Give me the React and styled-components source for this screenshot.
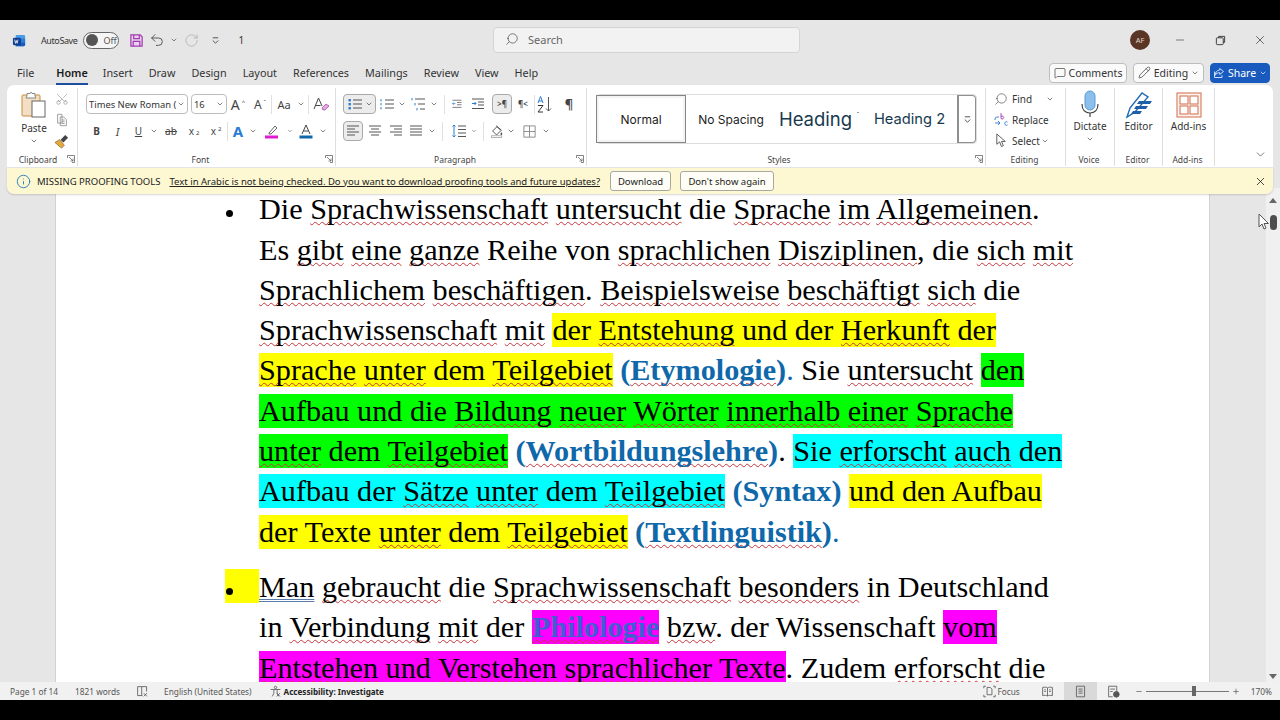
import React from 'react';
import styled, { createGlobalStyle } from 'styled-components';
import {
  Search, Scissors, Pencil, MessageSquare, X, Minus, Undo2, RotateCw, ChevronDown, Info, Plus,
} from 'lucide-react';

const ui = '"Noto Sans", "Open Sans", sans-serif';

const GlobalStyle = createGlobalStyle`
  html, body { margin: 0; padding: 0; background: #000; }
  * { box-sizing: border-box; }
`;

const Screen = styled.div`
  position: relative;
  width: 1280px;
  height: 720px;
  padding: 20px 0;
  background: #000;
  overflow: hidden;
  font-family: ${ui};
`;

const Window = styled.div`
  height: 680px;
  display: flex;
  flex-direction: column;
  background: #e6e6e6;
  color: #2b2b2b;
`;

/* title bar */
const TitleBar = styled.div`
  height: 40px;
  flex: none;
  display: flex;
  align-items: center;
`;

const QuickAccess = styled.div`
  width: 493px;
  padding-left: 12px;
  display: flex;
  align-items: center;
`;

const AutoSave = styled.span`
  margin: 0 6px 0 14px;
  font-size: 9px;
  letter-spacing: -.4px;
  color: #333;
`;

const Toggle = styled.div`
  width: 36px;
  height: 17px;
  border: 1px solid #666;
  border-radius: 9px;
  background: #f5f5f5;
  display: flex;
  align-items: center;
  gap: 5px;
  padding-left: 2px;
  font-size: 9px;
  color: #555;
  margin-right: 9px;
`;

const Knob = styled.span`
  width: 12px;
  height: 12px;
  border-radius: 50%;
  background: #555;
`;

const Slot = styled.div`
  width: ${p => p.$w}px;
  height: 20px;
  flex: none;
  margin-left: ${p => p.$ml || 0}px;
  display: flex;
  align-items: center;
  justify-content: center;
  font-size: ${p => p.$fs || 11}px;
  color: ${p => p.$c || '#333'};
`;

const SearchBox = styled.div`
  width: 307px;
  height: 26px;
  border: 1px solid #d4d4d4;
  border-radius: 4px;
  background: #f2f2f2;
  display: flex;
  align-items: center;
  gap: 9px;
  padding: 0 0 2px 11px;
  font-size: 11px;
  color: #666;
`;

const FlippedSearch = styled(Search)`
  transform: scaleX(-1);
`;

const TitleRight = styled.div`
  flex: 1;
  display: flex;
  align-items: center;
  justify-content: flex-end;
`;

const Avatar = styled.div`
  width: 20px;
  height: 20px;
  border-radius: 50%;
  background: #5a3526;
  color: #e6d5cc;
  font-size: 7.5px;
  display: flex;
  align-items: center;
  justify-content: center;
  margin-right: 10px;
`;

const WinBtn = styled.div`
  width: 40px;
  display: flex;
  justify-content: center;
  color: #333;
`;

/* tab row */
const TabRow = styled.div`
  height: 25px;
  flex: none;
  display: flex;
  align-items: center;
  padding: 0 10px 0 17px;
`;

const Tab = styled.div`
  margin-right: ${p => p.$mr}px;
  height: 25px;
  line-height: 26px;
  font-size: 10.8px;
  color: ${p => (p.$active ? '#1a1a1a' : '#333')};
  font-weight: ${p => (p.$active ? 600 : 400)};
  border-bottom: ${p => (p.$active ? '2px solid #1f4f9c' : '2px solid transparent')};
`;

const TabActions = styled.div`
  margin-left: auto;
  display: flex;
  gap: 6px;
`;

const ActionBtn = styled.div`
  height: 20px;
  width: ${p => p.$w}px;
  border: 1px solid ${p => (p.$primary ? '#185abd' : '#bdbdbd')};
  border-radius: 4px;
  background: ${p => (p.$primary ? '#185abd' : '#fafafa')};
  color: ${p => (p.$primary ? '#fff' : '#333')};
  display: flex;
  align-items: center;
  justify-content: center;
  gap: 3px;
  font-size: 10.5px;
`;

/* ribbon */
const Ribbon = styled.div`
  height: 82px;
  flex: none;
  margin: 0 7px;
  background: #fff;
  border-radius: 7px 7px 0 0;
  display: flex;
`;

const Group = styled.div`
  width: ${p => p.$w}px;
  flex: none;
  display: flex;
  flex-direction: column;
  margin: 3px 0 1px;
  border-right: 1px solid #dedede;
`;

const GroupBody = styled.div`
  flex: 1;
  display: flex;
  flex-direction: column;
  padding-left: ${p => p.$pl || 0}px;
  padding-top: ${p => p.$pt ?? 6}px;
  gap: ${p => p.$gap ?? 7}px;
  align-items: ${p => (p.$center ? 'center' : 'stretch')};
`;

const GroupLabel = styled.div`
  height: 14px;
  flex: none;
  display: grid;
  grid-template-columns: 1fr auto 1fr;
  align-items: center;
  font-size: 8.5px;
  color: #444;
  padding-right: 2px;
`;

const LabelText = styled.span`
  margin-right: ${p => p.$shift * 2}px;
`;

const Launcher = styled.span`
  justify-self: end;
  display: flex;
  color: #666;
`;

const ToolRow = styled.div`
  display: flex;
  align-items: center;
  height: 20px;
`;

const Tool = styled.div`
  width: ${p => p.$w}px;
  height: 20px;
  flex: none;
  display: flex;
  align-items: center;
  justify-content: center;
  gap: 2px;
  color: #444;
  font-size: ${p => p.$fs || 11}px;
  border-radius: 4px;
  border: 1px solid ${p => (p.$active ? '#a9a9a9' : 'transparent')};
  background: ${p => (p.$active ? '#ececec' : 'transparent')};
`;

const Glyph = styled.span`
  font-size: ${p => p.$fs || 10}px;
  font-weight: ${p => p.$fw || 400};
  color: ${p => p.$c || '#444'};
  line-height: 1;
`;

const Tiny = styled.span`
  font-size: 6px;
  line-height: 1;
  align-self: ${p => (p.$low ? 'flex-end' : 'flex-start')};
  margin-top: ${p => (p.$low ? 0 : 4)}px;
  margin-bottom: ${p => (p.$low ? 4 : 0)}px;
`;

const Sep = styled.div`
  width: 1px;
  height: 19px;
  flex: none;
  margin: 0 ${p => p.$m || 0}px;
  background: #e0e0e0;
`;

const Select = styled.div`
  width: ${p => p.$w}px;
  height: 20px;
  flex: none;
  margin-right: ${p => p.$mr || 0}px;
  border: 1px solid #bdbdbd;
  border-radius: 4px;
  display: flex;
  align-items: center;
  justify-content: space-between;
  padding: 0 2px;
  font-size: 9.4px;
  color: #333;
  white-space: nowrap;
`;

const ClipRow = styled.div`
  display: flex;
  padding-left: 7px;
`;

const PasteCol = styled.div`
  width: 40px;
  display: flex;
  flex-direction: column;
  align-items: center;
  font-size: 10px;
  color: #333;
`;

const ClipSmall = styled.div`
  display: flex;
  flex-direction: column;
  align-items: center;
  gap: 7px;
  padding-top: 1px;
  color: #888;
`;

const UprightScissors = styled(Scissors)`
  transform: rotate(-90deg);
`;

const BigLabel = styled.div`
  font-size: 10px;
  color: #333;
  margin-top: ${p => p.$mt ?? 3}px;
  margin-bottom: ${p => p.$mb || 0}px;
  line-height: 14px;
`;

const Gallery = styled.div`
  width: 381px;
  height: 50px;
  border: 1px solid #dcdcdc;
  border-radius: 4px;
  display: flex;
  align-items: center;
`;

const StyleItem = styled.div`
  width: ${p => p.$w || 90}px;
  height: ${p => (p.$selected ? 48 : 44)}px;
  margin-left: ${p => (p.$selected ? -1 : 0)}px;
  flex: none;
  display: flex;
  align-items: center;
  justify-content: center;
  border: ${p => (p.$selected ? '1px solid #858585' : 'none')};
  box-shadow: ${p => (p.$selected ? 'inset 0 0 0 2px #f3f3f3' : 'none')};
  font-family: Inter, "Noto Sans", sans-serif;
  font-size: ${p => p.$fs || 12}px;
  color: ${p => p.$c || '#1c1c1c'};
  white-space: nowrap;
`;

const Speck = styled.span`
  width: 2px;
  height: 1px;
  flex: none;
  align-self: flex-start;
  margin: 15px 0 0 5px;
  background: #8aa0ae;
`;

const MoreBtn = styled.div`
  flex: 1;
  height: 48px;
  border: 1px solid #8f8f8f;
  border-left-width: 2px;
  border-radius: 0 4px 4px 0;
  display: flex;
  align-items: center;
  justify-content: center;
  color: #444;
`;

const EditRow = styled.div`
  height: 21px;
  display: flex;
  align-items: center;
  font-size: 10px;
  color: #333;
`;

const EditIcon = styled.span`
  width: 26px;
  padding-left: 8px;
  display: flex;
  flex: none;
`;

const RibbonEnd = styled.div`
  flex: 1;
  display: flex;
  align-items: flex-end;
  justify-content: flex-end;
  padding: 0 6px 6px 0;
  color: #444;
`;

/* message bar */
const MessageBar = styled.div`
  height: 26px;
  flex: none;
  margin: 1px 7px 0;
  padding: 0 6px 0 9px;
  background: #fdf8d2;
  border-radius: 0 0 7px 7px;
  box-shadow: 0 1px 2px rgba(0, 0, 0, .16);
  display: flex;
  align-items: center;
  font-size: 9.5px;
  color: #222;
  position: relative;
  z-index: 1;
`;

const MsgTitle = styled.span`
  margin: 0 9px 0 6px;
  white-space: nowrap;
`;

const MsgLink = styled.span`
  text-decoration: underline;
  white-space: nowrap;
  margin-right: 10px;
`;

const MsgBtn = styled.div`
  height: 20px;
  width: ${p => p.$w}px;
  margin-right: 9px;
  border: 1px solid #a8a8a0;
  border-radius: 3px;
  background: #fffef6;
  display: flex;
  align-items: center;
  justify-content: center;
  white-space: nowrap;
`;

const MsgClose = styled.div`
  margin-left: auto;
  display: flex;
`;

/* document: runs a few px under the message bar and the status bar, like a scrolled page */
const DocArea = styled.div`
  flex: 1;
  min-height: 0;
  margin: -6px 0 -5px;
  display: flex;
`;

const Page = styled.div`
  width: 1155px;
  margin-left: 55px;
  flex: none;
  background: #fff;
  border-left: 1px solid #d2d2d2;
  border-right: 1px solid #d2d2d2;
  padding-left: 169px;
`;

const Paragraph = styled.div`
  display: grid;
  grid-template-columns: 34px 1fr;
  margin-top: ${p => p.$mt}px;
`;

const BulletCell = styled.div`
  height: 34px;
  margin-top: 2px;
  background: ${p => p.$hl || 'transparent'};
  display: flex;
  align-items: center;
  padding: 11px 0 0 1px;
`;

const Dot = styled.span`
  width: 7px;
  height: 7px;
  border-radius: 50%;
  background: #000;
`;

const Line = styled.div`
  height: 40.3px;
  line-height: 40.3px;
  font-family: "Liberation Serif", "Times New Roman", serif;
  font-size: 30.2px;
  color: #000;
  white-space: nowrap;
`;

const Mark = styled.span`
  background: ${p => p.$bg};
`;

const Term = styled.span`
  font-weight: ${p => (p.$plain ? 400 : 700)};
  color: ${p => p.$c || '#0f68a9'};
`;

const W = styled.span`
  text-decoration: underline wavy #c8353a 1px;
  text-underline-offset: 2px;
  text-decoration-skip-ink: none;
`;

const Grammar = styled.span`
  text-decoration: underline double #5a7ca8 1px;
  text-underline-offset: 2px;
  text-decoration-skip-ink: none;
`;

const Scrollbar = styled.div`
  margin-left: 56px;
  flex: 1;
  background: #f0f0f0;
  display: flex;
  flex-direction: column;
  align-items: center;
  padding: 10px 0 8px;
`;

const Arrow = styled.span`
  width: 0;
  height: 0;
  border-left: 4px solid transparent;
  border-right: 4px solid transparent;
  border-${p => (p.$down ? 'top' : 'bottom')}: 5px solid #666;
`;

const Thumb = styled.div`
  width: 7px;
  height: 15px;
  margin-top: 12px;
  border-radius: 4px;
  background: #4d4d4d;
`;

const Spacer = styled.div`
  flex: 1;
`;

const Cursor = styled.svg`
  position: absolute;
  left: 1258px;
  top: 213px;
`;

/* status bar */
const StatusBar = styled.div`
  height: 18px;
  flex: none;
  background: #f1f1f1;
  display: flex;
  align-items: center;
  padding-left: 10px;
  font-size: 8.3px;
  color: #555;
  position: relative;
  z-index: 1;
`;

const StatusText = styled.span`
  margin-left: ${p => p.$ml || 0}px;
  margin-right: ${p => p.$mr || 0}px;
  font-size: ${p => (p.$bold ? 8.1 : 8.3)}px;
  font-weight: ${p => (p.$bold ? 700 : 400)};
  color: ${p => (p.$bold ? '#222' : '#555')};
  white-space: nowrap;
`;

const StatusIcon = styled.span`
  display: flex;
  margin-right: ${p => p.$mr || 0}px;
  color: #555;
`;

const StatusRight = styled.div`
  margin-left: auto;
  display: flex;
  align-items: center;
  height: 18px;
  padding-right: 8px;
`;

const ViewBtn = styled.div`
  width: ${p => p.$w}px;
  height: 18px;
  margin-right: ${p => p.$mr || 0}px;
  display: flex;
  align-items: center;
  justify-content: center;
  background: ${p => (p.$active ? '#d9d9d9' : 'transparent')};
  color: #555;
`;

const ZoomTrack = styled.div`
  width: 83px;
  height: 1px;
  margin: 0 3px;
  background: #777;
  display: flex;
  align-items: center;
  padding-left: 46px;
`;

const ZoomThumb = styled.span`
  width: 4px;
  height: 10px;
  flex: none;
  background: #666;
`;

/* icons */
const Chev = ({ s = 8 }) => <ChevronDown size={s} strokeWidth={2} color="#444" />;

const Ico = ({ s = 16, vb = 16, children, ...rest }) => (
  <svg width={s} height={s} viewBox={`0 0 ${vb} ${vb}`} fill="none" stroke="currentColor" strokeWidth="1" {...rest}>
    {children}
  </svg>
);

const LineChev = () => (
  <Ico s={9} vb={10} stroke="#444">
    <path d="M2 2h6M2 5l3 3 3-3" />
  </Ico>
);

const WordLogo = () => (
  <svg width="15" height="15" viewBox="0 0 16 16">
    <path d="M4 2h8.500A1.500 1.500 0 0 1 14 3.500v9a1.500 1.500 0 0 1-1.500 1.500H4z" fill="#4a9be8" />
    <path d="M4 6h10v4H4z" fill="#2b7cd3" />
    <path d="M4 10h10v2.500a1.500 1.500 0 0 1-1.500 1.500H4z" fill="#185abd" />
    <rect x="1" y="5" width="8.500" height="8" rx="1.200" fill="#103f91" />
    <path d="M2.800 7l.9 4 .9-3 .9 3 .9-4" stroke="#fff" strokeWidth=".8" fill="none" />
  </svg>
);

const SaveIcon = () => (
  <svg width="15" height="15" viewBox="0 0 16 16" fill="none" stroke="#a23bb0" strokeWidth="1.300">
    <path d="M2 2h10l2 2v10H2z" fill="#e9d3ee" />
    <path d="M5 2v4h6V2M4.500 14V9h7v5" />
  </svg>
);

const Launch = () => (
  <Launcher>
    <Ico s={8} vb={8} strokeWidth=".8">
      <path d="M.5 3V.5H7.500V7.500H5M2 2l4 4M6 3.500V6H3.500" />
    </Ico>
  </Launcher>
);

const Label = ({ children, launcher, shift = 0 }) => (
  <GroupLabel>
    <span />
    <LabelText $shift={shift}>{children}</LabelText>
    {launcher ? <Launch /> : <span />}
  </GroupLabel>
);

const PasteIcon = () => (
  <svg width="26" height="28" viewBox="0 0 26 28" fill="none">
    <rect x="1" y="4" width="18" height="21" rx="1" fill="#f3dfc4" stroke="#c98b3c" />
    <path d="M6 5V2.500h3l1-1.500 1 1.500h3V5l1 2H5z" fill="#fff" stroke="#888" />
    <rect x="11" y="10" width="13" height="16" fill="#fff" stroke="#666" />
  </svg>
);

const CopyIcon = () => (
  <Ico s={14} strokeWidth=".9">
    <path d="M3 1.500h5v10H3zM6 4.500h4l3 3v7H6z" fill="#fff" />
    <path d="M8 8h3M8 10h3M8 12h3" />
  </Ico>
);

const PainterIcon = () => (
  <svg width="15" height="15" viewBox="0 0 16 16" fill="none">
    <path d="M1 9l5-3 5 6-3 3z" fill="#e8a93c" stroke="#8a6a2b" strokeWidth=".8" />
    <path d="M7 6l5-5 3 3-5 5z" fill="#444" />
  </svg>
);

const Lines = ({ rows, bullets, num }) => (
  <Ico s={16}>
    {rows.map(([x1, x2, y], i) => <path key={i} d={`M${x1} ${y}H${x2}`} stroke="#555" />)}
    {bullets && bullets.map(([x, y], i) => <rect key={i} x={x} y={y} width="2.400" height="2.400" fill="#2b7cd3" stroke="none" />)}
    {num && num.map(([x, y], i) => <path key={i} d={`M${x} ${y}v2.400`} stroke="#2b7cd3" />)}
  </Ico>
);

const IndentIcon = ({ dir }) => (
  <Ico s={16}>
    <path d="M2 3h12M8 6h6M8 9h6M2 12.500h12" stroke="#555" />
    <path d={dir === 'in' ? 'M2 7.500h4M4.500 6l1.500 1.500L4.500 9' : 'M6 7.500H2M3.500 6L2 7.500 3.500 9'} stroke="#2b7cd3" />
  </Ico>
);

const LineSpacing = () => (
  <Ico s={16}>
    <path d="M7 3h8M7 6.500h8M7 10h8M7 13.500h8" stroke="#555" />
    <path d="M3 2v12M1.500 3.500L3 2l1.500 1.500M1.500 12.500L3 14l1.500-1.500" stroke="#2b7cd3" />
  </Ico>
);

const ShadingIcon = () => (
  <Ico s={16}>
    <path d="M3 8l5-5 4.500 4.500-5 5z" stroke="#444" />
    <path d="M7 2l6 5" stroke="#444" />
    <path d="M13 9.500c.7 1 1 1.500 1 2a1 1 0 0 1-2 0c0-.5.3-1 1-2z" fill="#444" stroke="none" />
    <rect x="1.500" y="13.500" width="12" height="2" fill="#fff" stroke="#888" strokeWidth=".7" />
  </Ico>
);

const BordersIcon = () => (
  <Ico s={15} stroke="#8a8a8a">
    <path d="M2 2h12v12H2zM8 2v12M2 8h12" />
  </Ico>
);

const SortIcon = () => (
  <svg width="16" height="19" viewBox="0 0 16 19" fill="none">
    <path d="M1 8l2.500-6.500L6 8M1.800 6h3.400" stroke="#2b7cd3" />
    <path d="M1 10.500h5L1 17h5" stroke="#333" />
    <path d="M11.500 2v14M9 13.500l2.500 2.500 2.500-2.500" stroke="#555" />
  </svg>
);

const ClearIcon = () => (
  <svg width="17" height="16" viewBox="0 0 17 16" fill="none">
    <path d="M1 13L5.500 2 9 10M2.500 9.500h5" stroke="#444" />
    <path d="M9 12l4-4 3 2-4 4h-2z" fill="#e9a9d8" stroke="#a23bb0" strokeWidth=".7" />
  </svg>
);

const HighlightIcon = () => (
  <svg width="16" height="16" viewBox="0 0 16 16" fill="none">
    <path d="M5 10l6-7 2 2-6 6H5z" stroke="#666" />
    <rect x="1" y="12.500" width="13" height="3" fill="#e31ad1" />
  </svg>
);

const FontColorIcon = () => (
  <svg width="16" height="16" viewBox="0 0 16 16" fill="none">
    <path d="M4 11L8 2l4 9M5.500 8h5" stroke="#444" />
    <rect x="1.500" y="12.500" width="13" height="3" fill="#0f68a9" />
  </svg>
);

const MicIcon = () => (
  <svg width="26" height="28" viewBox="0 0 26 28" fill="none">
    <rect x="8" y="1" width="10" height="19" rx="5" fill="#8cc0ec" stroke="#5c9bd1" />
    <path d="M5 14c0 6 3.500 9 8 9s8-3 8-9" stroke="#444" strokeWidth="1.200" />
    <path d="M13 23v4" stroke="#444" strokeWidth="1.200" />
  </svg>
);

const EditorIcon = () => (
  <svg width="28" height="28" viewBox="0 0 28 28" fill="none">
    <path d="M2 26l3-9L17 2l6 4-13 15z" fill="#fff" stroke="#1f6bb5" strokeWidth="1.400" />
    <path d="M14 10h13l-2 3H12zM11 15h12l-2 3H9zM8 20h9l-2 3H6z" fill="#1f5fa8" />
  </svg>
);

const AddinsIcon = () => (
  <svg width="26" height="26" viewBox="0 0 26 26" fill="#fbeee8" stroke="#d4785a" strokeWidth="1.100">
    <rect x="1" y="1" width="24" height="24" fill="#fdf3ee" />
    <rect x="4" y="4" width="8" height="8" fill="#fff" />
    <rect x="14" y="4" width="8" height="8" fill="#fff" />
    <rect x="4" y="14" width="8" height="8" fill="#fff" />
    <rect x="14" y="14" width="8" height="8" fill="#fff" />
  </svg>
);

const ReplaceIcon = () => (
  <svg width="16" height="16" viewBox="0 0 16 16" fill="none" stroke="#2b7cd3" strokeWidth=".9">
    <path d="M5 5H3a2 2 0 0 0-2 2v1M1 11h5M4 9l2 2-2 2" />
    <path d="M7 1v5.500M7 4.500a1.500 1.500 0 1 1 0 2" stroke="#a23bb0" />
    <path d="M13.500 10a1.800 1.800 0 1 0 0 3" />
  </svg>
);

const SelectIcon = () => (
  <Ico s={15} stroke="#555">
    <path d="M3 1v11l3-2.500 2 5 2-1-2-4.500h4z" fill="#fff" />
  </Ico>
);

const RestoreIcon = () => (
  <Ico s={11} vb={12} stroke="#333">
    <rect x="1.500" y="3" width="7.500" height="7.500" rx="1" />
    <path d="M4 3V1.500h6.500V8H9" />
  </Ico>
);

const ProofIcon = () => (
  <Ico s={13} stroke="#555">
    <path d="M2 2h5v11H2zM7 2h6v6M7 13h1M9.500 10l4 4M13.500 10l-4 4" />
  </Ico>
);

const A11yIcon = () => (
  <Ico s={13} stroke="#555">
    <circle cx="8" cy="3" r="1.500" />
    <path d="M2 5.500h12M6 6v4l-2 4M10 6v4l2 4" />
    <path d="M9.500 10l4 4M13.500 10l-4 4" />
  </Ico>
);

const FocusIcon = () => (
  <Ico s={13} stroke="#555">
    <path d="M5 3h4l2 2v7H5zM1 4V1.500h2.500M15 4V1.500h-2.500M1 12v2.500h2.500M15 12v2.500h-2.500" />
  </Ico>
);

const ReadIcon = () => (
  <Ico s={13} stroke="#555">
    <path d="M8 3.500C6.500 2.500 4 2.500 2 3v10c2-.5 4.500-.5 6 .5 1.500-1 4-1 6-.5V3c-2-.5-4.500-.5-6 .5zM8 3.500v10" />
    <path d="M4 6h2M4 8h2M10 6h2M10 8h2" />
  </Ico>
);

const PrintIcon = () => (
  <Ico s={13} stroke="#555">
    <path d="M3 1.500h10v13H3zM5.500 5h5M5.500 7.500h5M5.500 10h5" />
  </Ico>
);

const WebIcon = () => (
  <Ico s={13} stroke="#555">
    <path d="M2 1.500h10V8M2 1.500v13h5M4 5h6M4 8h3" />
    <circle cx="11.500" cy="11.500" r="3.500" fill="#555" />
  </Ico>
);

const ShareIcon = () => (
  <svg width="12" height="12" viewBox="0 0 16 16" fill="none" stroke="#cfe2ff" strokeWidth="1.300">
    <path d="M9 2l5 4-5 4V7.500C6 7.500 4 9 3 11c0-4 2-6.500 6-7zM2 6v8h10v-3" />
  </svg>
);

const Tools = ({ items }) => (
  <ToolRow>
    {items.map((it, i) => (it.sep !== undefined
      ? <Sep key={i} $m={it.sep} />
      : <Tool key={i} $w={it.w} $active={it.active} $fs={it.fs}>{it.el}</Tool>))}
  </ToolRow>
);

const fontRow2 = [
  { w: 21, el: <b>B</b>, fs: 10 },
  { w: 21, el: <i>I</i>, fs: 11 },
  { w: 21, el: <u>U</u>, fs: 10 },
  { w: 10, el: <Chev /> },
  { w: 24, el: <s>ab</s>, fs: 10 },
  { w: 22, el: <>x<Tiny $low>2</Tiny></>, fs: 10 },
  { w: 22, el: <>x<Tiny>2</Tiny></>, fs: 10 },
  { sep: 0 },
  { w: 20, el: <Glyph $fs={15} $fw={700} $c="#2b7cd3">A</Glyph> },
  { w: 10, el: <Chev /> },
  { w: 28, el: <HighlightIcon /> },
  { w: 8, el: <Chev /> },
  { w: 24, el: <FontColorIcon /> },
  { w: 10, el: <Chev /> },
];

const para1 = [
  {
    w: 33,
    active: true,
    el: <><Lines rows={[[6, 15, 4], [6, 15, 8], [6, 15, 12]]} bullets={[[1.500, 3], [1.500, 7], [1.500, 11]]} /><Chev /></>,
  },
  { w: 21, el: <Lines rows={[[6, 15, 4], [6, 15, 8], [6, 15, 12]]} num={[[2, 3], [2, 7], [2, 11]]} /> },
  { w: 10, el: <Chev /> },
  { w: 22, el: <Lines rows={[[5, 15, 3], [8, 15, 8], [10, 15, 13]]} num={[[2, 2], [5, 7], [7, 12]]} /> },
  { w: 10, el: <Chev /> },
  { sep: 5 },
  { w: 14, el: <IndentIcon dir="out" /> },
  { w: 28, el: <IndentIcon dir="in" /> },
  { w: 20, active: true, el: <Glyph $fs={8} $fw={600}>&gt;¶</Glyph> },
  { w: 22, el: <Glyph $fs={8} $fw={600}>¶&lt;</Glyph> },
  { sep: 0 },
  { w: 20, el: <SortIcon /> },
  { w: 28, el: <Glyph $fs={13} $fw={600}>¶</Glyph> },
];

const para2 = [
  { w: 20, active: true, el: <Lines rows={[[2, 14, 3], [2, 10, 6], [2, 14, 9], [2, 10, 12]]} /> },
  { w: 24, el: <Lines rows={[[2, 14, 3], [4, 12, 6], [2, 14, 9], [4, 12, 12]]} /> },
  { w: 18, el: <Lines rows={[[2, 14, 3], [6, 14, 6], [2, 14, 9], [6, 14, 12]]} /> },
  { w: 22, el: <Lines rows={[[2, 14, 3], [2, 14, 6], [2, 14, 9], [2, 14, 12]]} /> },
  { w: 10, el: <Chev /> },
  { sep: 5 },
  { w: 22, el: <LineSpacing /> },
  { w: 8, el: <Chev /> },
  { sep: 5 },
  { w: 16, el: <ShadingIcon /> },
  { w: 12, el: <Chev /> },
  { w: 24, el: <BordersIcon /> },
  { w: 10, el: <Chev /> },
];

const App = () => (
  <>
    <GlobalStyle />
    <Screen>
      <Window>
        <TitleBar>
          <QuickAccess>
            <WordLogo />
            <AutoSave>AutoSave</AutoSave>
            <Toggle><Knob />Off</Toggle>
            <Slot $w={16}><SaveIcon /></Slot>
            <Slot $w={26}><Undo2 size={16} strokeWidth={1.300} color="#444" /></Slot>
            <Slot $w={8}><Chev /></Slot>
            <Slot $w={26}><RotateCw size={15} strokeWidth={1.200} color="#aaa" /></Slot>
            <Slot $w={22}><LineChev /></Slot>
            <Slot $w={22} $ml={4} $fs={10}>1</Slot>
            <Slot $w={0}><Chev s={10} /></Slot>
          </QuickAccess>
          <SearchBox><FlippedSearch size={14} strokeWidth={1.300} color="#555" />Search</SearchBox>
          <TitleRight>
            <Avatar>AF</Avatar>
            <WinBtn><Minus size={12} strokeWidth={1.200} /></WinBtn>
            <WinBtn><RestoreIcon /></WinBtn>
            <WinBtn><X size={14} strokeWidth={1.200} /></WinBtn>
          </TitleRight>
        </TitleBar>

        <TabRow>
          <Tab $mr={22}>File</Tab>
          <Tab $mr={15} $active>Home</Tab>
          <Tab $mr={16}>Insert</Tab>
          <Tab $mr={16}>Draw</Tab>
          <Tab $mr={16}>Design</Tab>
          <Tab $mr={16}>Layout</Tab>
          <Tab $mr={16}>References</Tab>
          <Tab $mr={16}>Mailings</Tab>
          <Tab $mr={16}>Review</Tab>
          <Tab $mr={16}>View</Tab>
          <Tab $mr={0}>Help</Tab>
          <TabActions>
            <ActionBtn $w={78}><MessageSquare size={12} strokeWidth={1.300} />Comments</ActionBtn>
            <ActionBtn $w={71}><Pencil size={13} strokeWidth={1.300} />Editing<Chev /></ActionBtn>
            <ActionBtn $w={60} $primary>
              <ShareIcon />
              Share<ChevronDown size={8} color="#fff" />
            </ActionBtn>
          </TabActions>
        </TabRow>

        <Ribbon>
          <Group $w={71}>
            <GroupBody $pt={3}>
              <ClipRow>
                <PasteCol>
                  <PasteIcon />
                  <BigLabel $mt={2} $mb={2}>Paste</BigLabel>
                  <Chev />
                </PasteCol>
                <ClipSmall>
                  <UprightScissors size={14} strokeWidth={1} />
                  <CopyIcon />
                  <PainterIcon />
                </ClipSmall>
              </ClipRow>
            </GroupBody>
            <Label launcher shift={3}>Clipboard</Label>
          </Group>

          <Group $w={258}>
            <GroupBody $pl={8}>
              <ToolRow>
                <Select $w={102} $mr={3}>Times New Roman (<Chev /></Select>
                <Select $w={36}>16<Chev /></Select>
                <Tool $w={22} $fs={14}>A<Tiny>^</Tiny></Tool>
                <Tool $w={22} $fs={12}>A<Tiny>ˇ</Tiny></Tool>
                <Sep />
                <Tool $w={24} $fs={11}>Aa</Tool>
                <Tool $w={10}><Chev /></Tool>
                <Sep $m={2} />
                <Tool $w={20}><ClearIcon /></Tool>
              </ToolRow>
              <Tools items={fontRow2} />
            </GroupBody>
            <Label launcher shift={5}>Font</Label>
          </Group>

          <Group $w={251}>
            <GroupBody $pl={7}>
              <Tools items={para1} />
              <Tools items={para2} />
            </GroupBody>
            <Label launcher shift={5}>Paragraph</Label>
          </Group>

          <Group $w={399}>
            <GroupBody $pl={9}>
              <Gallery>
                <StyleItem $selected>Normal</StyleItem>
                <StyleItem>No Spacing</StyleItem>
                <StyleItem $fs={18.500} $c="#17394f" $w={86}>Heading<Speck /></StyleItem>
                <StyleItem $fs={14.700} $c="#17394f" $w={95}>Heading 2</StyleItem>
                <MoreBtn><LineChev /></MoreBtn>
              </Gallery>
            </GroupBody>
            <Label launcher shift={6}>Styles</Label>
          </Group>

          <Group $w={80}>
            <GroupBody $pt={0} $gap={0}>
              <EditRow>
                <EditIcon><FlippedSearch size={14} strokeWidth={1} /></EditIcon>
                Find<Slot $w={36}><Chev /></Slot>
              </EditRow>
              <EditRow><EditIcon><ReplaceIcon /></EditIcon>Replace</EditRow>
              <EditRow><EditIcon><SelectIcon /></EditIcon>Select<Slot $w={10}><Chev /></Slot></EditRow>
            </GroupBody>
            <Label>Editing</Label>
          </Group>

          <Group $w={49}>
            <GroupBody $pt={2} $gap={0} $center>
              <MicIcon />
              <BigLabel $mt={1} $mb={2}>Dictate</BigLabel>
              <Chev />
            </GroupBody>
            <Label>Voice</Label>
          </Group>

          <Group $w={48}>
            <GroupBody $pt={3} $gap={0} $center>
              <EditorIcon />
              <BigLabel $mt={0}>Editor</BigLabel>
            </GroupBody>
            <Label>Editor</Label>
          </Group>

          <Group $w={52}>
            <GroupBody $pt={4} $gap={0} $center>
              <AddinsIcon />
              <BigLabel $mt={1}>Add-ins</BigLabel>
            </GroupBody>
            <Label>Add-ins</Label>
          </Group>

          <RibbonEnd><ChevronDown size={13} strokeWidth={1.300} /></RibbonEnd>
        </Ribbon>

        <MessageBar>
          <Info size={15} color="#2a7fb8" strokeWidth={1.500} />
          <MsgTitle>MISSING PROOFING TOOLS</MsgTitle>
          <MsgLink>Text in Arabic is not being checked. Do you want to download proofing tools and future updates?</MsgLink>
          <MsgBtn $w={61}>Download</MsgBtn>
          <MsgBtn $w={94}>Don't show again</MsgBtn>
          <MsgClose><X size={13} strokeWidth={1.500} /></MsgClose>
        </MessageBar>

        <DocArea>
          <Page>
            <Paragraph $mt={1.300}>
              <BulletCell><Dot /></BulletCell>
              <div>
                <Line>Die <W>Sprachwissenschaft</W> <W>untersucht</W> die <W>Sprache</W> <W>im</W> <W>Allgemeinen</W>.</Line>
                <Line>Es <W>gibt</W> <W>eine</W> <W>ganze</W> Reihe von <W>sprachlichen</W> <W>Disziplinen</W>, die <W>sich</W> <W>mit</W></Line>
                <Line><W>Sprachlichem</W> <W>beschäftigen</W>. <W>Beispielsweise</W> <W>beschäftigt</W> <W>sich</W> die</Line>
                <Line><W>Sprachwissenschaft</W> <W>mit</W> <Mark $bg="#ffff00">der <W>Entstehung</W> und der <W>Herkunft</W> der</Mark></Line>
                <Line><Mark $bg="#ffff00"><W>Sprache</W> <W>unter</W> dem <W>Teilgebiet</W></Mark> <Term>(<W>Etymologie</W>)</Term><Term $plain>.</Term> Sie <W>untersucht</W> <Mark $bg="#00ff00">den</Mark></Line>
                <Line><Mark $bg="#00ff00">Aufbau und die <W>Bildung</W> <W>neuer</W> <W>Wörter</W> <W>innerhalb</W> <W>einer</W> <W>Sprache</W></Mark></Line>
                <Line><Mark $bg="#00ff00"><W>unter</W> dem <W>Teilgebiet</W></Mark> <Term>(<W>Wortbildungslehre</W>)</Term>. <Mark $bg="#00ffff">Sie <W>erforscht</W> <W>auch</W> den</Mark></Line>
                <Line><Mark $bg="#00ffff">Aufbau der <W>Sätze</W> <W>unter</W> dem <W>Teilgebiet</W></Mark> <Term>(Syntax)</Term> <Mark $bg="#ffff00">und den Aufbau</Mark></Line>
                <Line><Mark $bg="#ffff00">der Texte <W>unter</W> dem <W>Teilgebiet</W></Mark> <Term>(<W>Textlinguistik</W>)</Term><Term $plain>.</Term></Line>
              </div>
            </Paragraph>
            <Paragraph $mt={15}>
              <BulletCell $hl="#ffff00"><Dot /></BulletCell>
              <div>
                <Line><Grammar>Man</Grammar> <W>gebraucht</W> die <W>Sprachwissenschaft</W> <W>besonders</W> in Deutschland</Line>
                <Line>in <W>Verbindung</W> <W>mit</W> der <Mark $bg="#ff00ff"><Term $c="#3f5fd0"><W>Philologie</W></Term></Mark> <W>bzw</W>. der Wissenschaft <Mark $bg="#ff00ff">vom</Mark></Line>
                <Line><Mark $bg="#ff00ff"><W>Entstehen</W> und <W>Verstehen</W> <W>sprachlicher</W> Texte</Mark>. Zudem <W>erforscht</W> die</Line>
              </div>
            </Paragraph>
          </Page>
          <Scrollbar>
            <Arrow />
            <Thumb />
            <Spacer />
            <Arrow $down />
          </Scrollbar>
        </DocArea>

        <StatusBar>
          <StatusText $mr={17}>Page 1 of 14</StatusText>
          <StatusText $mr={16}>1821 words</StatusText>
          <StatusIcon $mr={15}><ProofIcon /></StatusIcon>
          <StatusText $mr={17}>English (United States)</StatusText>
          <StatusIcon $mr={2}><A11yIcon /></StatusIcon>
          <StatusText $bold>Accessibility: Investigate</StatusText>
          <StatusRight>
            <StatusIcon $mr={1}><FocusIcon /></StatusIcon>
            <StatusText $mr={11}>Focus</StatusText>
            <ViewBtn $w={33}><ReadIcon /></ViewBtn>
            <ViewBtn $w={33} $active><PrintIcon /></ViewBtn>
            <ViewBtn $w={33} $mr={5}><WebIcon /></ViewBtn>
            <ViewBtn $w={8}><Minus size={9} /></ViewBtn>
            <ZoomTrack><ZoomThumb /></ZoomTrack>
            <ViewBtn $w={8}><Plus size={9} /></ViewBtn>
            <StatusText $ml={11}>170%</StatusText>
          </StatusRight>
        </StatusBar>
      </Window>
      <Cursor width="12" height="18" viewBox="0 0 12 18" fill="#fff" stroke="#555" strokeWidth="1">
        <path d="M1 1v13l3-3 2 5 2-1-2-4.500h4.500z" />
      </Cursor>
    </Screen>
  </>
);

export default App;
